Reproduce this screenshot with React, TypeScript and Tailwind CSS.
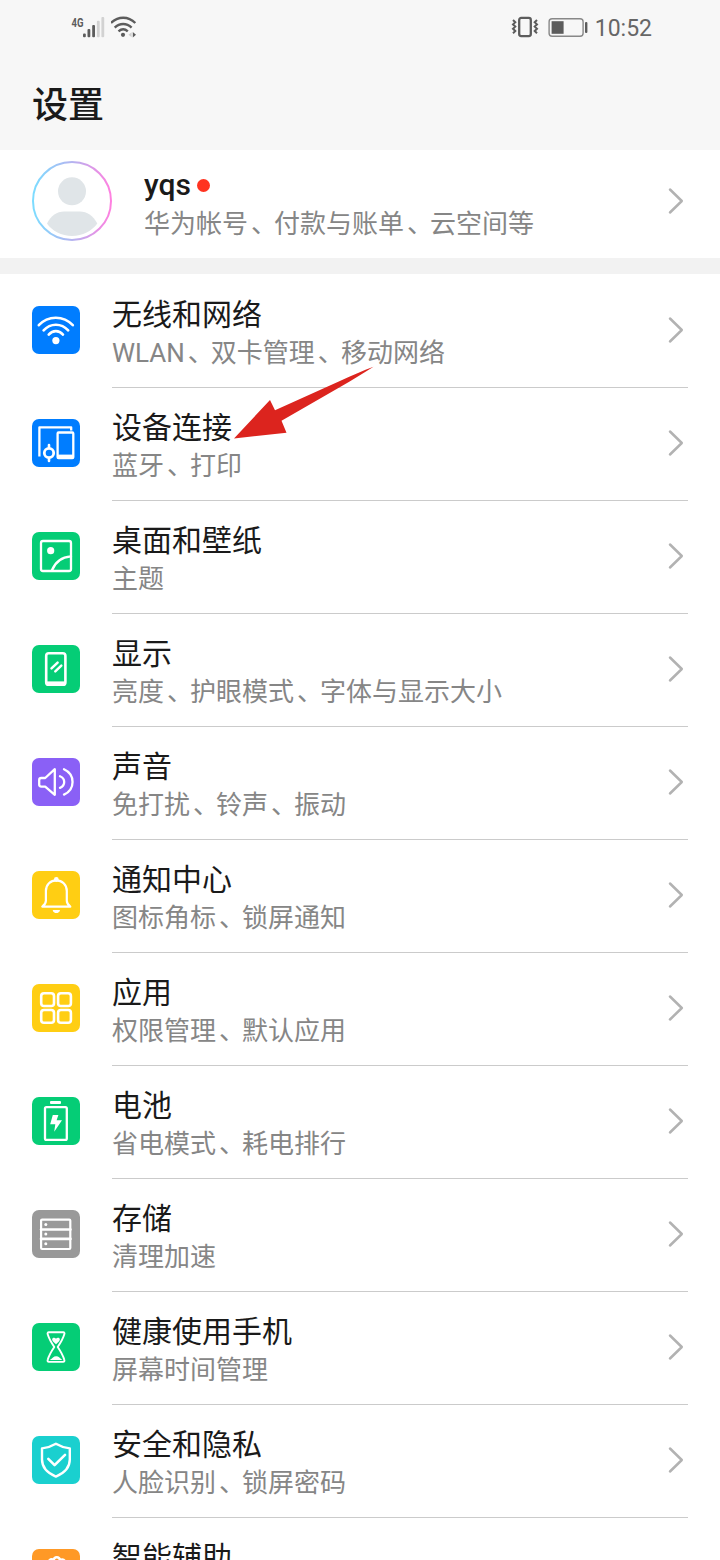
import type { ReactNode } from 'react';

type SettingsItem = {
  title: string;
  description?: string;
  color: string;
  icon: ReactNode;
};

const items: SettingsItem[] = [
  {
    title: '无线和网络',
    description: 'WLAN、双卡管理、移动网络',
    color: 'bg-[#007dff]',
    icon: (
      <>
        <path d="M6.8 19.2C16 9.2 31.5 9.2 40.8 19.2M11.6 24.4C18.5 16.8 29.3 16.8 36.2 24.4M16.7 28.6C20.8 24 26.9 24 31 28.6" />
        <circle cx="23.9" cy="34.6" r="3.6" fill="white" stroke="none" />
      </>
    ),
  },
  {
    title: '设备连接',
    description: '蓝牙、打印',
    color: 'bg-[#007dff]',
    icon: (
      <>
        <path d="M7.4 37.5V8.4H39.2V11.5" strokeLinecap="butt" strokeWidth="2.3" />
        <rect x="25.6" y="13.5" width="15.7" height="25.7" rx="1" strokeWidth="2.3" />
        <path d="M25.6 37.6H41.3" strokeWidth="4" strokeLinecap="butt" />
        <circle cx="17" cy="34" r="4.7" strokeWidth="2.8" />
        <path d="M17 26V29M17 39V42" />
      </>
    ),
  },
  {
    title: '桌面和壁纸',
    description: '主题',
    color: 'bg-[#05cd76]',
    icon: (
      <>
        <rect x="9" y="9" width="30" height="30" rx="2" strokeWidth="2.3" />
        <circle cx="18.7" cy="18.7" r="3.6" fill="white" stroke="none" />
        <path d="M19.8 38.5C23 30.5 29.5 25 39 24.3" strokeWidth="2.3" />
      </>
    ),
  },
  {
    title: '显示',
    description: '亮度、护眼模式、字体与显示大小',
    color: 'bg-[#05cd76]',
    icon: (
      <>
        <rect x="14.2" y="8.2" width="19.2" height="31.6" rx="2.6" />
        <path d="M14.5 38.4H33.2" strokeWidth="4" strokeLinecap="butt" />
        <path d="M19.5 23.4L25.6 17.6M23.3 26.3L29.3 20.6" strokeWidth="2.5" />
      </>
    ),
  },
  {
    title: '声音',
    description: '免打扰、铃声、振动',
    color: 'bg-[#8a60f6]',
    icon: (
      <>
        <path
          d="M9.3 20H13.2L22.8 11.2V36.8L13.2 28.6H9.3C8 28.6 7.2 27.9 7.2 26.6V22C7.2 20.7 8 20 9.3 20Z"
          strokeWidth="2.3"
        />
        <path d="M28 18.3C33.6 20.5 33.6 27.7 28 29.9M32 11.2C43.4 16.5 43.4 31.3 32 36.6" strokeWidth="2.3" />
      </>
    ),
  },
  {
    title: '通知中心',
    description: '图标角标、锁屏通知',
    color: 'bg-[#ffce13]',
    icon: (
      <>
        <path
          d="M10.3 35.7H38.3C36.2 34 34.8 32.3 34.8 29.8V20C34.8 13.5 30 9.4 24.3 9.4S13.9 13.5 13.9 20V29.8C13.9 32.3 12.5 34 10.3 35.7Z"
          strokeWidth="2.2"
        />
        <circle cx="24.3" cy="8.5" r="2.4" fill="white" stroke="none" />
        <path d="M20.7 38.9H28C27.5 43.1 21.2 43.1 20.7 38.9Z" fill="white" stroke="none" />
      </>
    ),
  },
  {
    title: '应用',
    description: '权限管理、默认应用',
    color: 'bg-[#ffce13]',
    icon: (
      <>
        <rect x="9.2" y="9.2" width="12.8" height="12.8" rx="2.8" />
        <rect x="26.1" y="9.2" width="12.8" height="12.8" rx="2.8" />
        <rect x="9.2" y="26" width="12.8" height="12.8" rx="2.8" />
        <rect x="26.1" y="26" width="12.8" height="12.8" rx="2.8" />
      </>
    ),
  },
  {
    title: '电池',
    description: '省电模式、耗电排行',
    color: 'bg-[#05cd76]',
    icon: (
      <>
        <rect x="13" y="10.2" width="21.8" height="32.6" rx="1.4" strokeWidth="2.3" />
        <rect x="18" y="4" width="11" height="3" rx="1" fill="white" stroke="none" />
        <path d="M20.8 18H26.4L24.6 23.2H30L22.2 34.8L23.3 27.2H18.2Z" fill="white" stroke="none" />
      </>
    ),
  },
  {
    title: '存储',
    description: '清理加速',
    color: 'bg-[#999999]',
    icon: (
      <>
        <rect x="9.1" y="9.6" width="29.2" height="29.4" rx="1" strokeWidth="2.2" />
        <path d="M9 19.5H38.5M9 28.9H38.5" />
        <circle cx="13.8" cy="14.5" r="1.5" fill="white" stroke="none" />
        <circle cx="13.8" cy="24.1" r="1.5" fill="white" stroke="none" />
        <circle cx="13.8" cy="33.8" r="1.5" fill="white" stroke="none" />
      </>
    ),
  },
  {
    title: '健康使用手机',
    description: '屏幕时间管理',
    color: 'bg-[#05cd76]',
    icon: (
      <>
        <path
          d="M16.8 9.3H31.3C32.3 9.3 32.8 10.2 32.3 11.3C31 15.8 28.8 19.5 25.7 24C28.8 28.5 31 32.3 32.3 36.8C32.7 38 32.2 38.9 31.2 38.9H16.8C15.8 38.9 15.3 38 15.7 36.8C17 32.3 19.2 28.5 22.3 24C19.2 19.5 17 15.8 15.7 11.3C15.3 10.2 15.8 9.3 16.8 9.3Z"
          strokeWidth="1.9"
        />
        <path
          d="M24 21.3C21 18.8 19.9 17.4 20.2 16.1C20.6 14.4 23 14.3 24 15.8C25 14.3 27.4 14.4 27.8 16.1C28.1 17.4 27 18.8 24 21.3Z"
          fill="white"
          stroke="none"
        />
        <path d="M17.8 37C20.5 35.5 21.5 33.3 24.2 33.3S28 35.5 30.3 37Z" fill="white" stroke="none" />
      </>
    ),
  },
  {
    title: '安全和隐私',
    description: '人脸识别、锁屏密码',
    color: 'bg-[#1ad0cf]',
    icon: (
      <>
        <path
          d="M23.9 7.7C28.5 10.4 33.2 11.9 37.8 12.4V23.5C37.8 32.2 31 37.6 23.9 40.6C16.8 37.6 10 32.2 10 23.5V12.4C14.6 11.9 19.3 10.4 23.9 7.7Z"
          strokeWidth="2.4"
        />
        <path d="M16.3 22.9L22.6 29.2L33 18.9" strokeWidth="2.6" />
      </>
    ),
  },
  {
    title: '智能辅助',
    color: 'bg-[#ff9926]',
    icon: (
      <>
        <circle cx="24.8" cy="11.4" r="3.2" />
        <path d="M17.5 11.5C18.8 10.2 20.2 10.2 21.4 11M29 10.8C31 10.2 32.3 11 33 12.5" />
      </>
    ),
  },
];

function Chevron() {
  return (
    <svg
      className="h-7 w-4 shrink-0"
      viewBox="0 0 16 28"
      fill="none"
      stroke="#b2b2b2"
      strokeWidth="2.5"
      strokeLinecap="round"
      strokeLinejoin="round"
    >
      <path d="M2 2.5L13.8 14L2 25.5" />
    </svg>
  );
}

// The enumeration comma sits a little right of where the font puts it
function Description({ text }: { text: string }) {
  return text.split('、').map((part, i) => (
    <span key={part}>
      {i > 0 && <span className="-mr-[3px] pl-[3px]">、</span>}
      {part}
    </span>
  ));
}

function StatusBar() {
  return (
    <div className="flex h-[54px] items-center justify-between pr-[68px] pl-[71px]">
      <div className="flex items-center">
        <svg className="h-6 w-[34px]" viewBox="0 0 34 24">
          <text
            x="0.5"
            y="11.5"
            fontSize="12"
            fontWeight="700"
            textLength="12"
            lengthAdjust="spacingAndGlyphs"
            fill="#5c5c5c"
          >
            4G
          </text>
          <g fill="#5c5c5c">
            <rect x="12" y="18.5" width="2.8" height="3.8" rx="1" />
            <rect x="16.5" y="14" width="2.8" height="8.3" rx="1" />
            <rect x="21.2" y="10" width="2.8" height="12.3" rx="1" />
          </g>
          <g fill="#d2d2d2">
            <rect x="25.9" y="5.8" width="2.8" height="16.5" rx="1" />
            <rect x="30.4" y="2" width="2.8" height="20.3" rx="1" />
          </g>
        </svg>
        <svg className="ml-1.5 h-6 w-7" viewBox="0 0 28 24" fill="none" stroke="#5c5c5c" strokeWidth="2.4">
          <path d="M0 8C7 .9 17.3 .9 24.3 8M3.7 12.6C8.7 7.7 15.6 7.7 20.6 12.6M7.5 16.4C10.4 13.8 14 13.8 16.8 16.4" />
          <circle cx="12" cy="19.8" r="2.1" fill="#5c5c5c" stroke="none" />
          <path d="M20.6 17.2V22.2L17.5 19.7Z" fill="#cfcfcf" stroke="none" />
          <path d="M21.8 17V22.4L25 19.7Z" fill="#5c5c5c" stroke="none" />
        </svg>
      </div>
      <div className="flex items-center">
        <svg className="h-6 w-7" viewBox="0 0 28 24" fill="none" stroke="#5c5c5c">
          <rect x="8.2" y="2.9" width="11.6" height="18.2" rx="2" strokeWidth="2.3" />
          <path
            d="M2 5L4.3 7.2L2 9.4L4.3 11.6L2 13.8L4.3 16L2 18.2M26 5L23.7 7.2L26 9.4L23.7 11.6L26 13.8L23.7 16L26 18.2"
            strokeWidth="2"
          />
        </svg>
        <svg className="ml-[9px] h-6 w-10" viewBox="0 0 40 24" fill="none">
          <rect x="1.1" y="3.7" width="34" height="17.6" rx="3" stroke="#888888" strokeWidth="1.4" />
          <rect x="3.6" y="6.2" width="12" height="12.6" fill="#5c5c5c" />
          <rect x="37" y="7.1" width="2.4" height="11" rx="1" fill="#5c5c5c" />
        </svg>
        <span className="ml-[7px] pt-[3px] text-[23px] leading-none text-[#666666]">10:52</span>
      </div>
    </div>
  );
}

function AccountRow() {
  return (
    <div className="flex h-[108px] shrink-0 items-center bg-white pr-9 pl-8">
      <svg className="mb-1.5 h-20 w-20 shrink-0" viewBox="0 0 80 80">
        <defs>
          <linearGradient id="ring" x1="0" y1="0" x2="1" y2="0">
            <stop offset="0" stopColor="#7cdcff" />
            <stop offset="0.5" stopColor="#b4b4f0" />
            <stop offset="1" stopColor="#ff80e0" />
          </linearGradient>
        </defs>
        <circle cx="40" cy="40" r="39" fill="white" stroke="url(#ring)" strokeWidth="2" />
        <circle cx="40" cy="30.3" r="14" fill="#e0e5e8" />
        <path
          d="M15 62.5C19 54.5 25 50.5 32 50.5H48C55 50.5 61 54.5 65.3 62.5C60 70 50.5 75 40 75S20 70 15 62.5Z"
          fill="#e0e5e8"
        />
      </svg>
      <div className="ml-8 flex-1 pt-1">
        <div className="flex items-center">
          <span className="text-[30px] leading-9 font-medium text-[#1a1a1a]">yqs</span>
          <span className="ml-1.5 h-[13px] w-[13px] rounded-full bg-[#ff3320]" />
        </div>
        <p className="text-[26px] leading-[42px] text-[#868686]">
          <Description text="华为帐号、付款与账单、云空间等" />
        </p>
      </div>
      <div className="mb-1.5">
        <Chevron />
      </div>
    </div>
  );
}

function SettingsRow({ title, description, color, icon }: SettingsItem) {
  return (
    <li className="flex h-[113px] shrink-0 pr-8 pl-8">
      <div className={`mt-[31px] h-12 w-12 shrink-0 rounded-[7px] ${color}`}>
        <svg
          className="h-12 w-12"
          viewBox="0 0 48 48"
          fill="none"
          stroke="white"
          strokeWidth="2.6"
          strokeLinecap="round"
          strokeLinejoin="round"
        >
          {icon}
        </svg>
      </div>
      <div className="ml-8 flex flex-1 items-start border-b border-[#cbcbcb] pr-1">
        <div className="flex-1 pt-[19px]">
          <h2 className="text-[30px] leading-[42px] text-[#1a1a1a]">{title}</h2>
          {description && (
            <p className="text-[26px] leading-[34px] text-[#868686]">
              <Description text={description} />
            </p>
          )}
        </div>
        <div className="mt-[41px]">
          <Chevron />
        </div>
      </div>
    </li>
  );
}

function Arrow() {
  return (
    <svg className="absolute top-[366px] left-[234px] h-[74px] w-[140px]" viewBox="0 0 140 74">
      <path
        d="M0 72.5L36 34L41 44.2L107 14.5C118 9.5 129 4.5 139.5 .7C129 7.5 118 14 107 20.5L47.5 54.7L52.5 66.7Z"
        fill="#dc241e"
      />
    </svg>
  );
}

export default function App() {
  return (
    <div className="relative flex h-[1560px] w-[720px] flex-col overflow-hidden bg-white font-[Roboto,'Noto_Sans_CJK_SC',sans-serif]">
      <header className="h-[150px] shrink-0 bg-[#f7f7f7]">
        <StatusBar />
        <h1 className="pt-[26px] pl-8 text-[36px] leading-[52px] font-medium text-[#1a1a1a]">设置</h1>
      </header>
      <AccountRow />
      <div className="h-4 shrink-0 bg-[#f2f2f2]" />
      <ul className="flex flex-col pt-px">
        {items.map((item) => (
          <SettingsRow key={item.title} {...item} />
        ))}
      </ul>
      <Arrow />
    </div>
  );
}
